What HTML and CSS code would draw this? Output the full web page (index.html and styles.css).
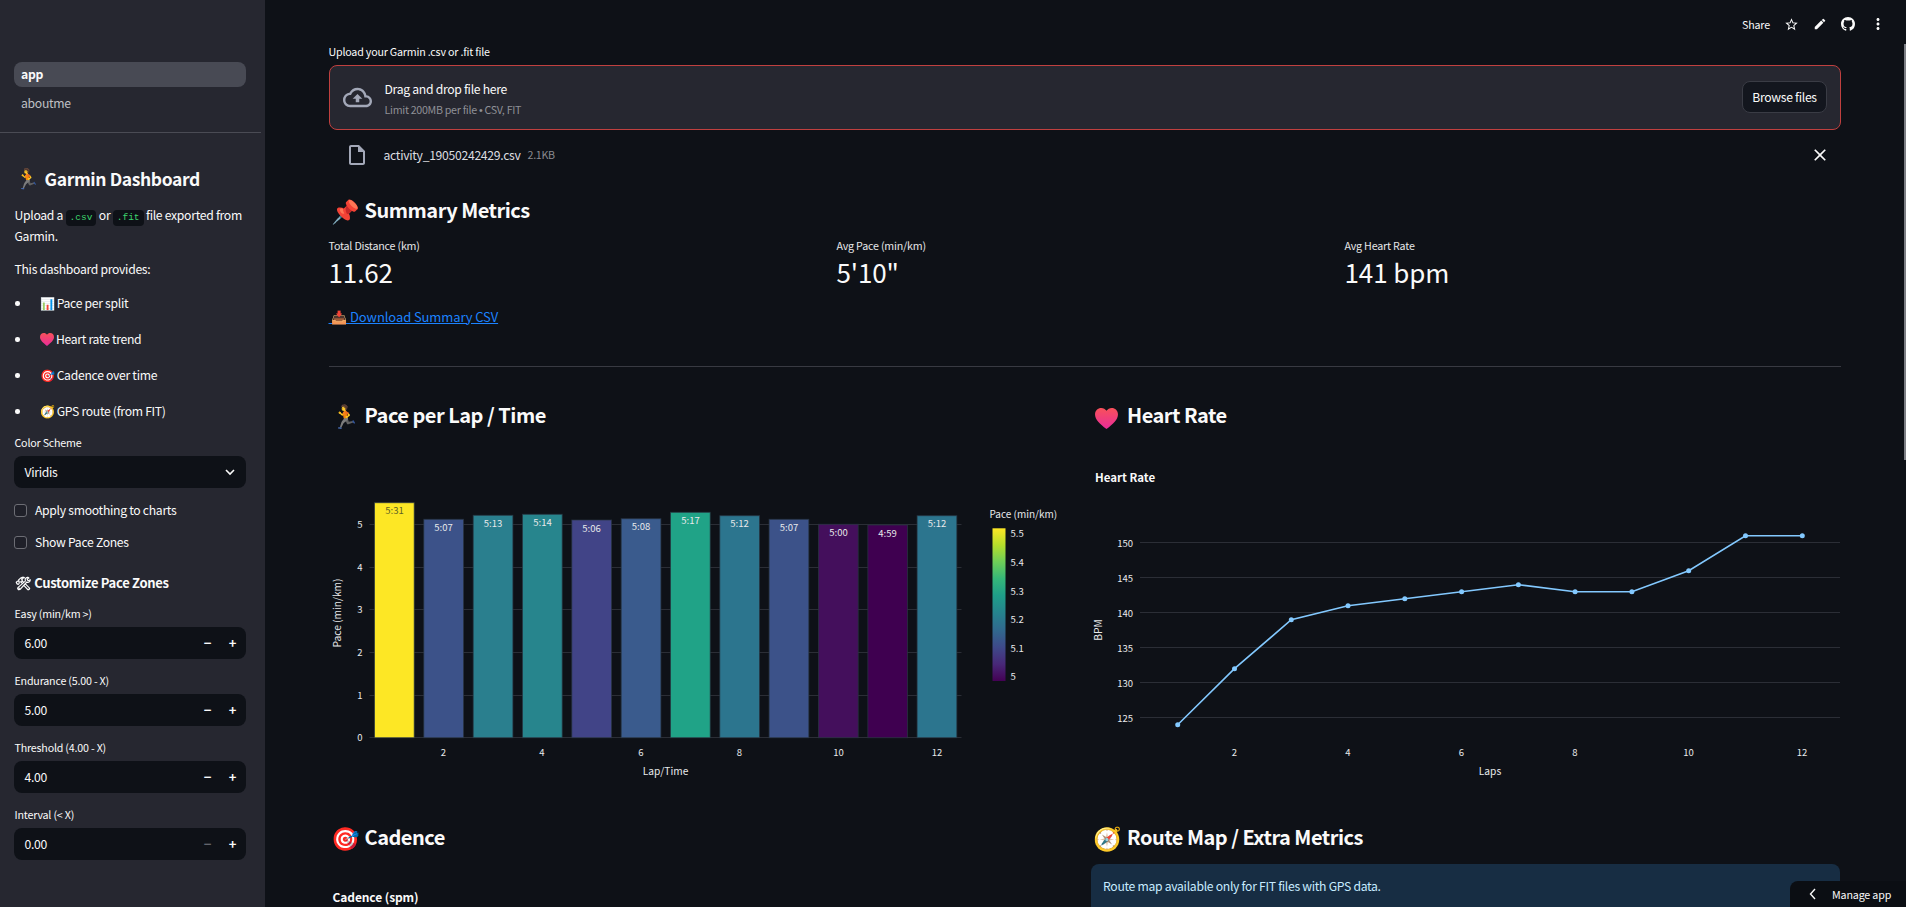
FILE: index.html
```html
<!DOCTYPE html>
<html lang="en">
<head>
<meta charset="utf-8">
<title>Garmin Dashboard</title>
<link rel="stylesheet" href="styles.css">
</head>
<body>
<div class="app">
  <aside class="sidebar">
    <nav class="nav">
      <a class="nav-item active">app</a>
      <a class="nav-item">aboutme</a>
    </nav>
    <hr class="side-rule">
    <div class="side-body">
      <h2 class="side-title"><span class="emo">🏃</span> Garmin Dashboard</h2>
      <p class="p1">Upload a <code>.csv</code> or <code>.fit</code> file exported from Garmin.</p>
      <p class="p2">This dashboard provides:</p>
      <ul class="feat">
        <li>📊 Pace per split</li>
        <li><svg class="heart-s" width="14" height="13" viewBox="0 0 24 22"><defs><linearGradient id="hs" x1="0" y1="0" x2="0" y2="1"><stop offset="0" stop-color="#f8515a"/><stop offset="1" stop-color="#e92c9a"/></linearGradient></defs><path fill="url(#hs)" d="M12 22C5 16.500 0 12 0 6.700 0 2.800 3 0 6.500 0 8.800 0 10.800 1.100 12 3 13.200 1.100 15.200 0 17.500 0 21 0 24 2.800 24 6.700 24 12 19 16.500 12 22z"/></svg> Heart rate trend</li>
        <li>🎯 Cadence over time</li>
        <li>🧭 GPS route (from FIT)</li>
      </ul>
      <label class="lbl lbl-first">Color Scheme</label>
      <div class="field"><span>Viridis</span>
        <svg class="chev" width="12" height="12" viewBox="0 0 12 12"><path d="M2 4l4 4 4-4" fill="none" stroke="#fafafa" stroke-width="1.6"/></svg>
      </div>
      <div class="check first"><i class="box"></i>Apply smoothing to charts</div>
      <div class="check"><i class="box"></i>Show Pace Zones</div>
      <h3 class="side-sub"><span class="tool">🛠</span> Customize Pace Zones</h3>
      <label class="lbl">Easy (min/km &gt;)</label>
      <div class="field"><span>6.00</span><span class="steps"><b>−</b><b>+</b></span></div>
      <label class="lbl">Endurance (5.00 - X)</label>
      <div class="field"><span>5.00</span><span class="steps"><b>−</b><b>+</b></span></div>
      <label class="lbl">Threshold (4.00 - X)</label>
      <div class="field"><span>4.00</span><span class="steps"><b>−</b><b>+</b></span></div>
      <label class="lbl">Interval (&lt; X)</label>
      <div class="field"><span>0.00</span><span class="steps"><b class="off">−</b><b>+</b></span></div>
    </div>
  </aside>

  <main class="main">
    <header class="topbar">
      <span class="share">Share</span>
      <svg class="ti" width="15" height="15" viewBox="0 0 24 24"><path fill="#fafafa" d="M22 9.24l-7.19-.62L12 2 9.19 8.63 2 9.24l5.46 4.73L5.82 21 12 17.27 18.18 21l-1.63-7.03L22 9.24zM12 15.4l-3.76 2.27 1-4.28-3.32-2.88 4.38-.38L12 6.1l1.71 4.04 4.38.38-3.32 2.88 1 4.28L12 15.4z"/></svg>
      <svg class="ti" width="14" height="14" viewBox="0 0 24 24"><path fill="#fafafa" d="M3 17.25V21h3.75L17.81 9.94l-3.75-3.75L3 17.25zM20.71 7.04a.996.996 0 0 0 0-1.41l-2.34-2.34a.996.996 0 0 0-1.41 0l-1.83 1.83 3.75 3.75 1.83-1.83z"/></svg>
      <svg class="ti" width="14" height="14" viewBox="0 0 16 16"><path fill="#fafafa" d="M8 0C3.58 0 0 3.58 0 8c0 3.54 2.29 6.53 5.47 7.59.4.07.55-.17.55-.38 0-.19-.01-.82-.01-1.49-2.01.37-2.53-.49-2.69-.94-.09-.23-.48-.94-.82-1.13-.28-.15-.68-.52-.01-.53.63-.01 1.08.58 1.23.82.72 1.21 1.87.87 2.33.66.07-.52.28-.87.51-1.07-1.78-.2-3.64-.89-3.64-3.95 0-.87.31-1.59.82-2.15-.08-.2-.36-1.02.08-2.12 0 0 .67-.21 2.2.82.64-.18 1.32-.27 2-.27.68 0 1.36.09 2 .27 1.53-1.04 2.2-.82 2.2-.82.44 1.1.16 1.92.08 2.12.51.56.82 1.27.82 2.15 0 3.07-1.87 3.75-3.65 3.95.29.25.54.73.54 1.48 0 1.07-.01 1.93-.01 2.2 0 .21.15.46.55.38A8.013 8.013 0 0016 8c0-4.42-3.58-8-8-8z"/></svg>
      <svg class="ti" width="18" height="18" viewBox="0 0 24 24"><path fill="#fafafa" d="M12 8c1.100 0 2-.9 2-2s-.9-2-2-2-2 .9-2 2 .9 2 2 2zm0 2c-1.100 0-2 .9-2 2s.9 2 2 2 2-.9 2-2-.9-2-2-2zm0 6c-1.100 0-2 .9-2 2s.9 2 2 2 2-.9 2-2-.9-2-2-2z"/></svg>
    </header>

    <div class="content">
      <label class="lbl upload-lbl">Upload your Garmin .csv or .fit file</label>
      <section class="drop">
        <svg width="29" height="29" viewBox="0 0 24 24"><path fill="#a3a8b8" d="M19.35 10.04C18.67 6.59 15.64 4 12 4 9.11 4 6.6 5.64 5.35 8.04 2.34 8.36 0 10.91 0 14c0 3.31 2.69 6 6 6h13c2.76 0 5-2.24 5-5 0-2.64-2.05-4.78-4.65-4.96zM19 18H6c-2.21 0-4-1.79-4-4 0-2.05 1.53-3.76 3.56-3.97l1.07-.11.5-.95C8.08 7.14 9.94 6 12 6c2.62 0 4.88 1.86 5.39 4.43l.3 1.5 1.53.11c1.56.1 2.78 1.41 2.78 2.96 0 1.65-1.35 3-3 3zM8 13h2.55v3h2.9v-3H16l-4-4z"/></svg>
        <div class="drop-text">
          <div class="drop-main">Drag and drop file here</div>
          <div class="drop-sub">Limit 200MB per file <span class="sep">•</span> CSV, FIT</div>
        </div>
        <button class="browse">Browse files</button>
      </section>
      <div class="file-row">
        <svg width="24" height="24" viewBox="0 0 24 24"><path fill="#a3a8b8" d="M14 2H6c-1.1 0-1.99.9-1.99 2L4 20c0 1.1.89 2 1.99 2H18c1.1 0 2-.9 2-2V8l-6-6zM6 20V4h7v5h5v11H6z"/></svg>
        <span class="file-name">activity_19050242429.csv</span>
        <span class="file-size">2.1KB</span>
        <svg class="file-x" width="20" height="20" viewBox="0 0 24 24"><path fill="#fafafa" d="M19 6.41L17.59 5 12 10.59 6.41 5 5 6.41 10.59 12 5 17.59 6.41 19 12 13.41 17.59 19 19 17.59 13.41 12z"/></svg>
      </div>

      <h2 class="h sum-h"><span class="emo">📌</span> Summary Metrics</h2>
      <div class="metrics">
        <div><div class="m-lbl">Total Distance (km)</div><div class="m-val">11.62</div></div>
        <div><div class="m-lbl">Avg Pace (min/km)</div><div class="m-val">5'10"</div></div>
        <div><div class="m-lbl">Avg Heart Rate</div><div class="m-val">141 bpm</div></div>
      </div>
      <a class="dl">&nbsp;📥&nbsp;Download Summary CSV</a>
      <hr class="rule">

      <div class="cols cols-first">
        <div class="col">
          <h2 class="h"><span class="emo">🏃</span> Pace per Lap / Time</h2>
          <svg class="chart" width="749" height="380" viewBox="328.5 440 749 380">
            <g class="grid">
              <path d="M369 524.5H961M369 567.5H961M369 609.5H961M369 652.5H961M369 695.5H961M369 737.5H961"/>
            </g>
            <g class="bars">
              <rect x="374" y="502.7" width="39.7" height="235" fill="#fde725"/>
              <rect x="423.3" y="519.3" width="39.7" height="218.4" fill="#3c5289"/>
              <rect x="472.7" y="515.3" width="39.7" height="222.4" fill="#2a7f8e"/>
              <rect x="522" y="514.3" width="39.7" height="223.4" fill="#27858d"/>
              <rect x="571.3" y="520" width="39.7" height="217.7" fill="#414487"/>
              <rect x="620.7" y="518.7" width="39.7" height="219" fill="#3a5b8d"/>
              <rect x="670" y="512.3" width="39.7" height="225.4" fill="#20a387"/>
              <rect x="719.3" y="515.7" width="39.7" height="222" fill="#2c758e"/>
              <rect x="768.6" y="519.3" width="39.7" height="218.4" fill="#3c5289"/>
              <rect x="818" y="524.3" width="39.7" height="213.4" fill="#440f5c"/>
              <rect x="867.3" y="525" width="39.7" height="212.7" fill="#3f0050"/>
              <rect x="916.6" y="515.7" width="39.7" height="222" fill="#2c758e"/>
            </g>
            <g class="t-in">
              <text x="394" y="514" class="dark">5:31</text>
              <text x="443" y="531">5:07</text>
              <text x="492.5" y="527">5:13</text>
              <text x="542" y="526">5:14</text>
              <text x="591" y="532">5:06</text>
              <text x="640.5" y="530">5:08</text>
              <text x="690" y="524">5:17</text>
              <text x="739" y="527">5:12</text>
              <text x="788.5" y="531">5:07</text>
              <text x="838" y="536">5:00</text>
              <text x="887" y="537">4:59</text>
              <text x="936.5" y="527">5:12</text>
            </g>
            <g class="t-y">
              <text x="362" y="528">5</text><text x="362" y="571">4</text><text x="362" y="613">3</text><text x="362" y="656">2</text><text x="362" y="699">1</text><text x="362" y="741">0</text>
            </g>
            <g class="t-x">
              <text x="443" y="756">2</text><text x="541.5" y="756">4</text><text x="640.5" y="756">6</text><text x="739" y="756">8</text><text x="838" y="756">10</text><text x="936.5" y="756">12</text>
            </g>
            <text class="ax" x="665" y="775">Lap/Time</text>
            <text class="ax" transform="translate(340 613) rotate(-90)">Pace (min/km)</text>
            <text class="ax-l" x="989" y="518">Pace (min/km)</text>
            <defs>
              <linearGradient id="vir" x1="0" y1="1" x2="0" y2="0">
                <stop offset="0" stop-color="#440154"/><stop offset=".11" stop-color="#482878"/><stop offset=".22" stop-color="#3e4989"/><stop offset=".33" stop-color="#31688e"/><stop offset=".44" stop-color="#26828e"/><stop offset=".56" stop-color="#1f9e89"/><stop offset=".67" stop-color="#35b779"/><stop offset=".78" stop-color="#6ece58"/><stop offset=".89" stop-color="#b5de2b"/><stop offset="1" stop-color="#fde725"/>
              </linearGradient>
            </defs>
            <rect x="992" y="528.3" width="13" height="152.7" fill="url(#vir)"/>
            <g class="t-c">
              <text x="1010" y="537">5.5</text><text x="1010" y="566">5.4</text><text x="1010" y="595">5.3</text><text x="1010" y="623">5.2</text><text x="1010" y="652">5.1</text><text x="1010" y="680">5</text>
            </g>
          </svg>
        </div>
        <div class="col">
          <h2 class="h"><span class="emo"><svg class="heart" width="23" height="21" viewBox="0 0 24 22"><defs><linearGradient id="hl" x1="0" y1="0" x2="0" y2="1"><stop offset="0" stop-color="#f8515a"/><stop offset="1" stop-color="#e92c9a"/></linearGradient></defs><path fill="url(#hl)" d="M12 22C5 16.500 0 12 0 6.700 0 2.800 3 0 6.500 0 8.800 0 10.800 1.100 12 3 13.200 1.100 15.200 0 17.500 0 21 0 24 2.800 24 6.700 24 12 19 16.500 12 22z"/></svg></span> Heart Rate</h2>
          <svg class="chart" width="749" height="380" viewBox="1091 440 749 380">
            <text class="c-title" x="1095" y="482">Heart Rate</text>
            <g class="grid"><path d="M1140 542.5H1840M1140 577.5H1840M1140 612.5H1840M1140 647.5H1840M1140 682.5H1840M1140 717.5H1840"/></g>
            <g class="t-y">
              <text x="1133" y="547">150</text><text x="1133" y="582">145</text><text x="1133" y="617">140</text><text x="1133" y="652">135</text><text x="1133" y="687">130</text><text x="1133" y="722">125</text>
            </g>
            <g class="t-x">
              <text x="1234.5" y="756">2</text><text x="1348" y="756">4</text><text x="1461.5" y="756">6</text><text x="1575" y="756">8</text><text x="1688.5" y="756">10</text><text x="1802" y="756">12</text>
            </g>
            <text class="ax" x="1490" y="775">Laps</text>
            <text class="ax" transform="translate(1102 630) rotate(-90)">BPM</text>
            <polyline class="line" points="1177.7,724.7 1234.5,668.7 1291.3,619.7 1348,605.7 1404.8,598.7 1461.6,591.7 1518.4,584.7 1575.1,591.7 1631.9,591.7 1688.7,570.7 1745.5,535.7 1802.3,535.7"/>
            <g class="dots">
              <circle cx="1177.7" cy="724.7" r="2.5"/><circle cx="1234.5" cy="668.7" r="2.5"/><circle cx="1291.3" cy="619.7" r="2.5"/><circle cx="1348" cy="605.7" r="2.5"/><circle cx="1404.8" cy="598.7" r="2.5"/><circle cx="1461.6" cy="591.7" r="2.5"/><circle cx="1518.4" cy="584.7" r="2.5"/><circle cx="1575.1" cy="591.7" r="2.5"/><circle cx="1631.9" cy="591.7" r="2.5"/><circle cx="1688.7" cy="570.7" r="2.5"/><circle cx="1745.5" cy="535.7" r="2.5"/><circle cx="1802.3" cy="535.7" r="2.5"/>
            </g>
          </svg>
        </div>
      </div>

      <div class="cols cols-second">
        <div class="col">
          <h2 class="h"><span class="emo">🎯</span> Cadence</h2>
          <div class="c-title-block">Cadence (spm)</div>
        </div>
        <div class="col">
          <h2 class="h"><span class="emo">🧭</span> Route Map / Extra Metrics</h2>
          <div class="info">Route map available only for FIT files with GPS data.</div>
        </div>
      </div>
    </div>
    <div class="scroll-thumb"></div>
    <div class="manage">
      <svg width="10" height="12" viewBox="0 0 10 12"><path d="M7 1L2.5 6 7 11" fill="none" stroke="#fafafa" stroke-width="1.4"/></svg>
      <span>Manage app</span>
    </div>
  </main>
</div>
</body>
</html>
```
FILE: styles.css
```css
* { box-sizing: border-box; }
html, body { margin: 0; height: 100%; overflow: hidden; }
body {
  background: #0e1117;
  color: #fafafa;
  font-family: "Noto Sans CJK SC", "Noto Sans", sans-serif;
  font-size: 12.2px;
  letter-spacing: -.3px;
}
.app { display: flex; height: 907px; overflow: hidden; }

/* sidebar */
.sidebar { width: 265px; flex: none; background: #262730; padding-top: 62px; overflow: hidden; }
.nav { display: flex; flex-direction: column; gap: 4px; padding: 0 19px 0 14px; }
.nav-item { height: 25px; line-height: 24px; padding-left: 7px; border-radius: 8px; color: #bfc0c4; }
.nav-item.active { background: #484a54; color: #fafafa; font-weight: 600; }
.side-rule { border: 0; border-top: 1px solid #4a4b54; margin: 16px 4px 0 0; }
.side-body { padding: 0 19px 0 14.5px; }
.side-title { margin: 32px 0 0; font-size: 17.5px; font-weight: 600; line-height: 28px; height: 28px; white-space: nowrap; letter-spacing: -.4px; }
.side-title .emo { display: inline-block; width: 26.5px; font-size: 20px; line-height: 20px; letter-spacing: 0; }
.p1 { margin: 12px 0 0; line-height: 20px; }
.p2 { margin: 13px 0 0; line-height: 20px; }
code { display: inline-block; font-family: "Liberation Mono", monospace; font-size: 9.5px; line-height: 16px; letter-spacing: 0; color: #3dd56d; background: #0e1117; padding: 0 4px; border-radius: 4px; }
.feat { margin: 14px 0 0; padding: 0; list-style: none; }
.feat li { position: relative; padding-left: 25px; height: 36px; line-height: 20px; }
.feat li::before { content: ""; position: absolute; left: .5px; top: 8px; width: 4.5px; height: 4.5px; border-radius: 50%; background: #fafafa; }
.heart-s { vertical-align: -2px; }
.lbl { display: block; font-size: 10.7px; letter-spacing: -.2px; line-height: 16px; height: 16px; white-space: nowrap; }
.lbl-first { margin-top: -2.5px; }
.field { display: flex; align-items: center; justify-content: space-between; width: 232px; height: 32px; margin-top: 5px; padding: 0 10.5px; background: #0e1117; border-radius: 8px; margin-left: -.5px; }
.steps { display: flex; gap: 13px; margin-right: -3px; font-size: 13px; }
.steps b { width: 12px; text-align: center; font-weight: 600; }
.steps .off { color: #62646c; }
.check { display: flex; align-items: center; gap: 8px; height: 20px; margin-top: 12px; margin-left: -.5px; }
.check.first { margin-top: 12.5px; }
.box { width: 13px; height: 13px; border: 1px solid #6c6d74; border-radius: 3px; background: #1f2029; }
.side-sub { font-size: 13px; font-weight: 600; margin: 21px 0 0; line-height: 20px; height: 20px; white-space: nowrap; letter-spacing: -.3px; }
.tool { filter: grayscale(1) brightness(1.7); letter-spacing: 0; }
.side-sub + .lbl { margin-top: 12.5px; }
.field + .lbl { margin-top: 14px; }

/* main */
.main { position: relative; flex: 1; min-width: 0; overflow: hidden; }
.topbar { display: flex; align-items: center; justify-content: flex-end; height: 44px; padding: 4px 19px 0 0; }
.share { font-size: 10.7px; letter-spacing: -.15px; }
.ti { margin-left: 14px; }
.content { width: 1512.5px; margin-left: 63.5px; }
.drop { display: flex; align-items: center; height: 64.5px; margin-top: 5px; padding: 0 13px; background: #262730; border: 1px solid #c0403f; border-radius: 8px; }
.drop-text { margin-left: 13px; flex: 1; padding-top: 2px; }
.drop-main { line-height: 20px; }
.drop-sub { font-size: 10.7px; letter-spacing: -.3px; color: #8f9096; line-height: 16px; margin-top: 3px; }
.sep { font-family: "Liberation Sans", sans-serif; }
.browse { width: 85px; height: 32px; background: #13161e; border: 1px solid #3a3c45; border-radius: 8px; color: #fafafa; font: inherit; letter-spacing: inherit; padding: 0; }
.file-row { display: flex; align-items: center; height: 24px; margin-top: 13px; padding-left: 16px; }
.file-name { margin-left: 15px; color: #dcdde0; }
.file-size { margin-left: 7px; font-size: 10.7px; color: #8a8b90; }
.file-x { margin-left: auto; margin-right: 11px; }
.h { margin: 0; font-size: 20px; font-weight: 600; line-height: 32px; height: 32px; white-space: nowrap; padding-left: 4px; letter-spacing: -.5px; }
.h .emo { display: inline-block; width: 28px; font-size: 23px; line-height: 32px; letter-spacing: 0; vertical-align: top; margin-left: -2px; margin-right: 2px; }
.heart { vertical-align: -4px; margin-left: 2px; }
.sum-h { margin-top: 27px; }
.metrics { display: grid; grid-template-columns: repeat(3, 508px); margin-top: 12px; }
.m-lbl { font-size: 10.7px; letter-spacing: -.2px; line-height: 16px; color: #e6e6e8; }
.m-val { font-size: 26px; line-height: 40px; margin-top: -2px; letter-spacing: -.1px; }
.dl { display: block; margin-top: 15px; line-height: 20px; font-size: 13px; letter-spacing: -.1px; color: #1c83ff; text-decoration: underline; }
.rule { border: 0; border-top: 1px solid #383a42; margin: 39px 0 0; }
.cols { display: grid; grid-template-columns: 749px 749px; column-gap: 13.5px; }
.cols-first { margin-top: 32px; }
.cols-second { margin-top: 1px; }
.chart { display: block; margin-top: 9px; }
.chart .grid path { fill: none; stroke: #2b2e36; stroke-width: 1; }
.bars rect { stroke: #283442; stroke-width: 1; stroke-opacity: .7; }
.chart text { font-family: "Noto Sans CJK SC", "Noto Sans", sans-serif; fill: #e8e9eb; font-size: 9.5px; letter-spacing: 0; }
.t-in text { text-anchor: middle; }
.chart .t-in text.dark { fill: #5f6326; }
.t-y text { text-anchor: end; }
.t-x text { text-anchor: middle; }
.chart .ax { font-size: 10.2px; text-anchor: middle; }
.chart .ax-l { font-size: 10px; }
.chart .c-title { font-size: 11.5px; font-weight: 700; fill: #fafafa; }
.line { fill: none; stroke: #83c9ff; stroke-width: 1.6; }
.dots circle { fill: #83c9ff; }
.c-title-block { font-size: 12px; font-weight: 700; margin: 35px 0 0 4px; letter-spacing: -.1px; }
.info { margin-top: 11px; height: 60px; padding: 13px 12px; border-radius: 8px; background: #172d43; color: #c7ebff; }
.scroll-thumb { position: absolute; right: 0; top: 44px; width: 2px; height: 416px; background: #7d7f85; }
.manage { position: absolute; right: 0; bottom: 0; width: 116px; height: 26px; display: flex; align-items: center; padding-left: 18px; gap: 14px; background: #0b0e13; border-top-left-radius: 8px; font-size: 10.7px; letter-spacing: -.15px; }
```
